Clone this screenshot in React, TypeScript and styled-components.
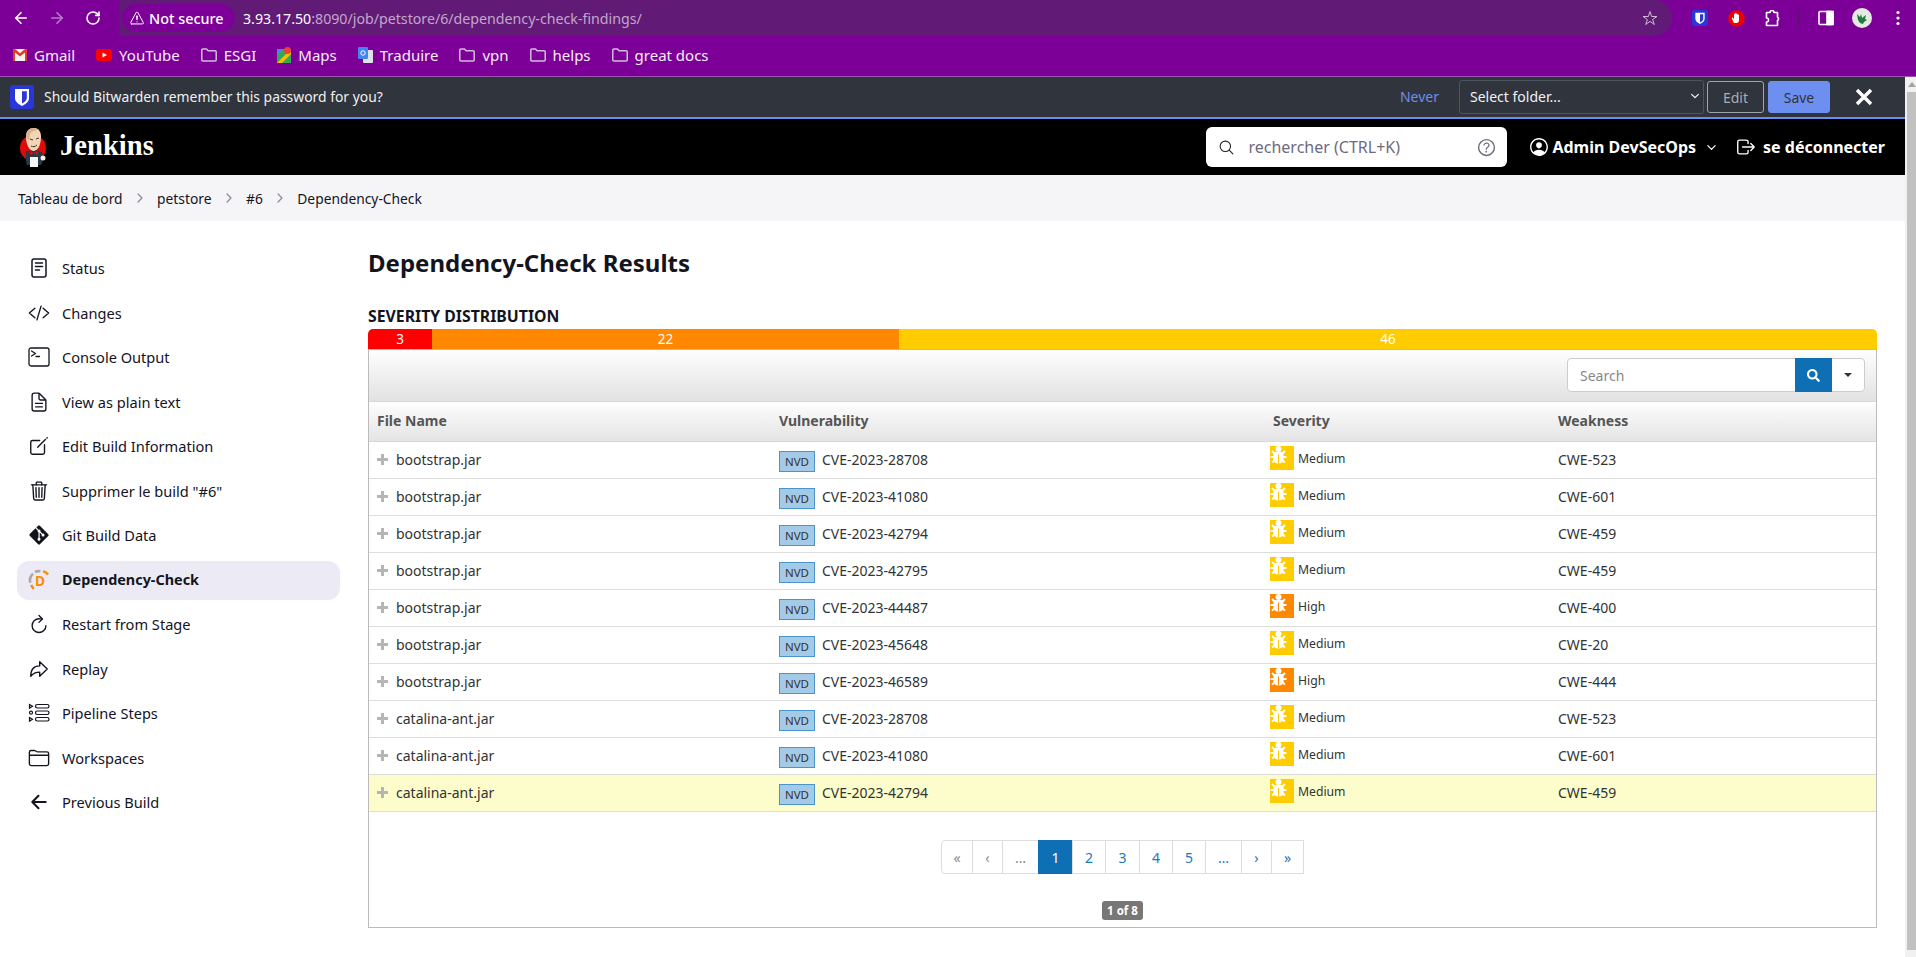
import React from 'react'
import styled, { createGlobalStyle } from 'styled-components'
import { ArrowLeft, ArrowRight, RotateCw } from 'lucide-react'
import {
  IoArrowBack,
  IoArrowRedoOutline,
  IoChevronDown,
  IoChevronForward,
  IoCodeSlashOutline,
  IoCreateOutline,
  IoDocumentTextOutline,
  IoFolderOutline,
  IoHelpCircleOutline,
  IoLogOutOutline,
  IoPersonCircleOutline,
  IoRefreshOutline,
  IoSearchOutline,
  IoStarOutline,
  IoTrashOutline,
  IoWarningOutline,
} from 'react-icons/io5'
import { FaGitAlt, FaSearch } from 'react-icons/fa'

const GlobalStyle = createGlobalStyle`
  html, body {
    margin: 0;
    height: 957px;
    overflow: hidden;
    background: #fff;
    font-family: "Noto Sans", "Open Sans", sans-serif;
    color: #14141f;
  }
  * { box-sizing: border-box; }
`

const Page = styled.div`
  width: 1916px;
  height: 957px;
  display: flex;
  flex-direction: column;
  overflow: hidden;
`

/* browser chrome */
const Toolbar = styled.div`
  height: 36px;
  flex: none;
  background: #7c0098;
  display: flex;
  align-items: center;
  padding-left: 3px;
  color: #fff;
`
const NavButton = styled.span<{ $dim?: boolean }>`
  width: 36px;
  display: flex;
  justify-content: center;
  color: ${p => (p.$dim ? '#b57ec6' : '#fff')};
`
const AddressBar = styled.div`
  margin-left: 8px;
  width: 1553px;
  height: 36px;
  background: #611b76;
  border-radius: 0 18px 18px 0;
  display: flex;
  align-items: center;
  padding: 0 14px 0 3px;
  font-size: 14.2px;
`
const SecureChip = styled.span`
  height: 28px;
  width: 113px;
  background: #7c0098;
  border-radius: 14px;
  display: flex;
  align-items: center;
  gap: 4px;
  padding-left: 7px;
  font-size: 14.4px;
  font-weight: 500;
  svg { font-size: 16px; }
`
const Url = styled.span`
  margin-left: 8px;
  color: #fff;
  span { color: #c3a6cd; }
`
const StarSlot = styled.span`
  margin-left: auto;
  color: #cdb9d4;
  font-size: 16px;
  display: flex;
`
const Extensions = styled.div`
  display: flex;
  align-items: center;
  margin-left: 10px;
`
const ExtSlot = styled.span`
  width: 36px;
  display: flex;
  justify-content: center;
  svg { display: block; }
`
const ToolDivider = styled.span`
  width: 1px;
  height: 16px;
  margin: 0 9px 0 8px;
  background: #551268;
`

const Bookmarks = styled.div`
  height: 41px;
  flex: none;
  background: #7c0098;
  border-bottom: 1px solid #9a55ad;
  padding: 0 0 2px 13px;
  display: flex;
  align-items: center;
  gap: 21px;
  color: #f6ecf8;
  font-size: 15px;
`
const Bookmark = styled.span`
  display: flex;
  align-items: center;
  gap: 7px;
  svg { display: block; }
`

/* window area: page on the left, window scrollbar on the right */
const Viewport = styled.div`
  flex: 1;
  display: flex;
  min-height: 0;
`
const ViewportBody = styled.div`
  flex: 1;
  min-width: 0;
`
const Scrollbar = styled.div`
  width: 11px;
  flex: none;
  background: #f1f1f1;
  display: flex;
  flex-direction: column;
  align-items: center;
  padding-top: 5px;
`
const ScrollArrow = styled.span`
  width: 0;
  height: 0;
  margin-left: 2px;
  border-left: 4px solid transparent;
  border-right: 4px solid transparent;
  border-bottom: 5px solid #a3a3a3;
`
const ScrollThumb = styled.span`
  width: 9px;
  flex: 1;
  align-self: flex-end;
  background: #c1c1c1;
  margin: 5px 0 7px;
`

/* bitwarden notification */
const NotifyBar = styled.div`
  height: 42px;
  background: #2f343d;
  border-bottom: 2px solid #6b8eee;
  display: flex;
  align-items: center;
  padding-left: 10px;
  color: #f0f0f0;
  font-size: 14px;
`
const NotifyText = styled.span`
  margin: 0 0 2px 10px;
  font-size: 13.9px;
`
const NeverLink = styled.span`
  margin: 0 0 2px auto;
  color: #6f8fe8;
`
const FolderSelect = styled.span`
  margin-left: 20px;
  width: 245px;
  height: 34px;
  border: 1px solid #4f5560;
  border-radius: 3px;
  display: flex;
  align-items: center;
  justify-content: space-between;
  padding: 0 2px 2px 10px;
  font-size: 14px;
  svg { font-size: 12px; color: #fff; }
`
const NotifyButton = styled.span<{ $primary?: boolean }>`
  height: 32px;
  margin-left: ${p => (p.$primary ? '4px' : '3px')};
  width: ${p => (p.$primary ? '62px' : '57px')};
  border: 1px solid ${p => (p.$primary ? '#6d8ff0' : '#a0a5ad')};
  background: ${p => (p.$primary ? '#6d8ff0' : 'transparent')};
  color: ${p => (p.$primary ? '#2f343d' : '#a9adb5')};
  border-radius: 3px;
  display: flex;
  align-items: center;
  justify-content: center;
  font-size: 14px;
`
const CloseX = styled.span`
  margin: 0 32px 0 25px;
  display: flex;
  svg { display: block; }
`

/* jenkins */
const JenkinsHeader = styled.header`
  height: 56px;
  background: #000;
  color: #fff;
  display: flex;
  align-items: center;
  padding: 0 20px 0 19px;
`
const Brand = styled.span`
  font-family: "Liberation Serif", serif;
  font-weight: 700;
  font-size: 28.6px;
  margin: 0 0 3px 13px;
`
const HeaderSearch = styled.div`
  margin-left: auto;
  width: 301px;
  height: 40px;
  background: #fff;
  border-radius: 6px;
  display: flex;
  align-items: center;
  padding: 0 9px 0 12px;
  color: #6d6b80;
  font-size: 16px;
  svg:first-child { font-size: 17px; color: #222; }
  span { margin-left: 13px; flex: 1; }
  svg:last-child { font-size: 23px; color: #6d6b80; }
`
const HeaderLink = styled.span`
  display: flex;
  align-items: center;
  font-weight: 700;
  font-size: 16px;
  svg { display: block; }
`
const UserLink = styled(HeaderLink)`
  margin-left: 21px;
  gap: 2px;
  svg:last-child { margin-left: 7px; }
`
const LogoutLink = styled(HeaderLink)`
  margin-left: 17px;
  gap: 6px;
`
const Breadcrumbs = styled.nav`
  height: 46px;
  background: #f5f5f7;
  display: flex;
  align-items: center;
  padding-left: 18px;
  font-size: 13.8px;
  svg { color: #8d8d99; font-size: 14px; margin: 0 10px 0 10.5px; }
`
const Layout = styled.div`
  display: flex;
  align-items: flex-start;
`
const Sidebar = styled.aside`
  width: 323px;
  margin-left: 17px;
  padding-top: 28px;
  display: flex;
  flex-direction: column;
  gap: 5.5px;
`
const SideItem = styled.a<{ $active?: boolean }>`
  height: 39px;
  display: flex;
  align-items: center;
  gap: 12px;
  padding: 0 0 1px 11px;
  border-radius: 12px;
  font-size: ${p => (p.$active ? '14.4px' : '14.6px')};
  font-weight: ${p => (p.$active ? 700 : 400)};
  background: ${p => (p.$active ? '#ecebf5' : 'transparent')};
`
const SideIcon = styled.span`
  width: 22px;
  height: 22px;
  display: flex;
  align-items: center;
  justify-content: center;
  font-size: 22px;
  svg { display: block; }
`
const Main = styled.main`
  width: 1509px;
  margin-left: 28px;
  padding-top: 25px;
`
const Title = styled.h1`
  margin: 0;
  font-size: 24px;
  line-height: 33px;
  font-weight: 700;
`
const SectionLabel = styled.h2`
  margin: 27px 0 3px;
  font-size: 15.8px;
  line-height: 20px;
  font-weight: 700;
`
const SeverityBar = styled.div`
  height: 20px;
  display: flex;
  border-radius: 5px 5px 0 0;
  overflow: hidden;
`
const SeveritySegment = styled.span<{ $color: string; $width?: number }>`
  width: ${p => (p.$width ? `${p.$width}px` : 'auto')};
  flex: ${p => (p.$width ? 'none' : 1)};
  background: ${p => p.$color};
  color: #fff;
  font-size: 13.5px;
  line-height: 20px;
  text-align: center;
`
const Panel = styled.section`
  border: 1px solid #bbb;
  height: 579px;
  display: flex;
  flex-direction: column;
  align-items: center;
`
const PanelToolbar = styled.div`
  align-self: stretch;
  height: 52px;
  flex: none;
  background: linear-gradient(#fefefe, #e2e2e2);
  border-bottom: 1px solid #d8d8d8;
  display: flex;
  justify-content: flex-end;
  padding: 8px 11px 0 0;
`
const SearchGroup = styled.div`
  width: 298px;
  height: 34px;
  display: flex;
  background: #fff;
  border: 1px solid #ccc;
  border-radius: 4px;
`
const SearchInput = styled.span`
  flex: 1;
  padding-left: 12px;
  color: #888;
  font-size: 14px;
  line-height: 33px;
`
const SearchButton = styled.span`
  width: 37px;
  margin: -1px 0;
  background: #0f6fb5;
  color: #fff;
  display: flex;
  align-items: center;
  justify-content: center;
  font-size: 13px;
`
const CaretButton = styled.span`
  width: 32px;
  display: flex;
  align-items: center;
  justify-content: center;
  &::before {
    content: '';
    border-left: 4px solid transparent;
    border-right: 4px solid transparent;
    border-top: 4px solid #333;
  }
`
const Table = styled.table`
  width: 100%;
  flex: none;
  table-layout: fixed;
  border-collapse: separate;
  border-spacing: 0;
  font-size: 14px;
  color: #333;
`
const HeadCell = styled.th`
  height: 40px;
  padding: 0 8px 2px;
  background: linear-gradient(#fefefe, #e4e4e4);
  border-bottom: 1px solid #d8d8d8;
  color: #555;
  font-size: 14px;
  font-weight: 700;
  text-align: left;
`
const Cell = styled.td<{ $hl?: boolean }>`
  height: 37px;
  padding: 0 8px 2px;
  background: ${p => (p.$hl ? '#fcfdcb' : '#fff')};
  border-bottom: 1px solid #ddd;
`
const FileCell = styled.span`
  display: flex;
  align-items: center;
  gap: 8px;
`
const PlusIcon = styled.span`
  width: 11px;
  height: 11px;
  background:
    linear-gradient(#b5b5b5, #b5b5b5) center / 100% 3px no-repeat,
    linear-gradient(#b5b5b5, #b5b5b5) center / 3px 100% no-repeat;
`
const VulnCell = styled.span`
  display: flex;
  align-items: center;
  gap: 7px;
`
const SourceTag = styled.span`
  width: 36px;
  height: 21px;
  margin-top: 4px;
  background: #a3cbe8;
  border: 1px solid #4a94c8;
  text-align: center;
  font-size: 11.5px;
  line-height: 20px;
`
const SeverityCell = styled(Cell)`
  padding: 4px 4px 0 5px;
  vertical-align: top;
`
const SeverityTag = styled.span`
  display: flex;
  align-items: center;
  gap: 4px;
  font-size: 12.2px;
`
const BugBox = styled.span<{ $high?: boolean }>`
  width: 24px;
  height: 24px;
  background: ${p => (p.$high ? '#ff8800' : '#ffcc00')};
  color: ${p => (p.$high ? '#ff8800' : '#ffcc00')};
  svg { display: block; }
`
const Pager = styled.ul`
  list-style: none;
  margin: 28px 0 0;
  padding: 0;
  display: flex;
  height: 34px;
  border-radius: 4px;
`
const PageCell = styled.li<{ $w: number; $active?: boolean; $muted?: boolean }>`
  width: ${p => p.$w}px;
  border: 1px solid #ddd;
  margin-left: -1px;
  display: flex;
  align-items: center;
  justify-content: center;
  font-size: 14px;
  background: ${p => (p.$active ? '#0f6fb5' : '#fff')};
  border-color: ${p => (p.$active ? '#0f6fb5' : '#ddd')};
  color: ${p => (p.$active ? '#fff' : p.$muted ? '#8a8a8a' : '#1f77bb')};
  &:first-child { border-radius: 4px 0 0 4px; margin-left: 0; }
`
const PageBadge = styled.span`
  margin-top: 27px;
  height: 19px;
  width: 41px;
  border-radius: 3px;
  background: #777;
  color: #fff;
  font-size: 11.5px;
  font-weight: 700;
  line-height: 19px;
  text-align: center;
`

const Folder = () => (
  <svg width="16" height="14" viewBox="0 0 16 14" fill="none" stroke="#d3bcdb" strokeWidth="1.5">
    <path d="M.8 2a1 1 0 0 1 1-1h3.700l1.600 1.800h7.100a1 1 0 0 1 1 1V12a1 1 0 0 1-1 1H1.800a1 1 0 0 1-1-1z" />
  </svg>
)

const BitwardenShield = ({ size = 24 }: { size?: number }) => (
  <svg width={size} height={size} viewBox="0 0 24 24">
    <rect width="24" height="24" rx="3" fill="#2a36d8" />
    <path d="M5 4h14v9c0 4-3.600 6.200-7 8-3.400-1.800-7-4-7-8z" fill="#fff" />
    <path d="M12 6.200h4.800v6.800c0 2.600-2.400 4.200-4.800 5.600z" fill="#2a36d8" />
  </svg>
)

const Bug = () => (
  <svg width="24" height="24" viewBox="0 0 24 24" fill="#fff" stroke="none">
    <circle cx="8.500" cy="3" r="3" />
    <rect x="3.500" y="6" width="10" height="9" rx="1" />
    <path d="M3.500 13h10v1c0 2-2 3.500-5 3.500s-5-1.500-5-3.500z" />
    <rect x="8" y="8.500" width="1" height="9" fill="currentColor" />
    <g stroke="#fff" strokeWidth="2" fill="none">
      <path d="M4.500 7.500L2 5M12.500 7.500L15 5M4 11H.5M13 11h3.500M4.500 14.500L2 16.500M12.500 14.500l2.500 2" />
    </g>
  </svg>
)

const JenkinsLogo = () => (
  <svg width="28" height="40" viewBox="0 0 28 40">
    <circle cx="14" cy="21" r="13" fill="#e00a0a" />
    <path d="M7 24c-1 5 0 11 1 14h14c2-4 3-8 1-13l-6-2z" fill="#2d3a45" />
    <rect x="11" y="30" width="8" height="10" fill="#f5f5f5" />
    <path d="M7 10c0-6 3-9 8-9 5 0 7 4 7 9 0 6-2 13-7 14-5 0-8-7-8-14z" fill="#f0d6b7" />
    <path d="M7 10c0-6 3-9 8-9 2 0 4 1 5 2-4 0-7 1-9 4l-1 7z" fill="#d9b18f" />
    <path d="M11 12l3 1M17 12l3-1M12 19c2 1 4 1 6-1" stroke="#49392e" strokeWidth="1" fill="none" />
    <path d="M11 24l4 2 4-2v4l-4-2-4 2z" fill="#e00a0a" />
    <circle cx="24" cy="31" r="2.500" fill="#f0f0f0" />
  </svg>
)

const StatusIcon = () => (
  <svg width="22" height="22" viewBox="0 0 22 22" fill="none" stroke="currentColor" strokeWidth="1.500" strokeLinecap="round">
    <rect x="4" y="2" width="14" height="18" rx="2" />
    <path d="M7.500 6h7M7.500 9.500h7M7.500 13h4" />
  </svg>
)

const ConsoleIcon = () => (
  <svg width="22" height="22" viewBox="0 0 22 22" fill="none" stroke="currentColor" strokeWidth="1.300" strokeLinecap="round" strokeLinejoin="round">
    <rect x="1" y="2" width="20" height="18" rx="2" />
    <path d="M3.500 5l4 2.500-4 2.500M8 10.500h3.500" />
  </svg>
)

const StepsIcon = () => (
  <svg width="22" height="22" viewBox="0 0 22 22" fill="none" stroke="currentColor" strokeWidth="1.200">
    <rect x="7.500" y="2.500" width="13.500" height="3.500" rx="1.700" />
    <rect x="7.500" y="9" width="13.500" height="3.500" rx="1.700" />
    <rect x="7.500" y="15.500" width="13.500" height="3.500" rx="1.700" />
    <path d="M1.500 2.500l3 1.800-3 1.800zM1.500 15.500l3 1.800-3 1.800z" />
    <circle cx="3" cy="10.700" r="1.500" />
  </svg>
)

const DepCheckIcon = () => (
  <svg width="24" height="24" viewBox="0 0 24 24" fill="none" strokeWidth="2.800">
    <path d="M2.500 15a10 10 0 0 1 3-10M7.500 3.300a10 10 0 0 1 6-.8" stroke="#a9a9a9" />
    <path d="M16.500 2.400a10 10 0 0 1 5.500 3.600M3.500 17.500a10 10 0 0 0 3 4" stroke="#ff8c00" />
    <text x="13" y="19" textAnchor="middle" fontFamily="'Noto Sans', sans-serif" fontSize="15" fontWeight="700" fill="#ff8c00" stroke="none">D</text>
  </svg>
)

const sideItems: { label: string; icon: React.ReactNode; active?: boolean }[] = [
  { label: 'Status', icon: <StatusIcon /> },
  { label: 'Changes', icon: <IoCodeSlashOutline /> },
  { label: 'Console Output', icon: <ConsoleIcon /> },
  { label: 'View as plain text', icon: <IoDocumentTextOutline /> },
  { label: 'Edit Build Information', icon: <IoCreateOutline /> },
  { label: 'Supprimer le build "#6"', icon: <IoTrashOutline /> },
  { label: 'Git Build Data', icon: <FaGitAlt /> },
  { label: 'Dependency-Check', icon: <DepCheckIcon />, active: true },
  { label: 'Restart from Stage', icon: <IoRefreshOutline /> },
  { label: 'Replay', icon: <IoArrowRedoOutline /> },
  { label: 'Pipeline Steps', icon: <StepsIcon /> },
  { label: 'Workspaces', icon: <IoFolderOutline /> },
  { label: 'Previous Build', icon: <IoArrowBack /> },
]

const findings = [
  ['bootstrap.jar', 'CVE-2023-28708', 'Medium', 'CWE-523'],
  ['bootstrap.jar', 'CVE-2023-41080', 'Medium', 'CWE-601'],
  ['bootstrap.jar', 'CVE-2023-42794', 'Medium', 'CWE-459'],
  ['bootstrap.jar', 'CVE-2023-42795', 'Medium', 'CWE-459'],
  ['bootstrap.jar', 'CVE-2023-44487', 'High', 'CWE-400'],
  ['bootstrap.jar', 'CVE-2023-45648', 'Medium', 'CWE-20'],
  ['bootstrap.jar', 'CVE-2023-46589', 'High', 'CWE-444'],
  ['catalina-ant.jar', 'CVE-2023-28708', 'Medium', 'CWE-523'],
  ['catalina-ant.jar', 'CVE-2023-41080', 'Medium', 'CWE-601'],
  ['catalina-ant.jar', 'CVE-2023-42794', 'Medium', 'CWE-459'],
]

const pages: { label: string; w: number; active?: boolean; muted?: boolean }[] = [
  { label: '«', w: 32, muted: true },
  { label: '‹', w: 31, muted: true },
  { label: '…', w: 37, muted: true },
  { label: '1', w: 35, active: true },
  { label: '2', w: 34 },
  { label: '3', w: 35 },
  { label: '4', w: 34 },
  { label: '5', w: 34 },
  { label: '…', w: 37 },
  { label: '›', w: 31 },
  { label: '»', w: 33 },
]

const App = () => (
  <Page>
    <GlobalStyle />
    <Toolbar>
      <NavButton><ArrowLeft size={18} strokeWidth={2.2} /></NavButton>
      <NavButton $dim><ArrowRight size={18} strokeWidth={2.2} /></NavButton>
      <NavButton><RotateCw size={16} strokeWidth={2.4} /></NavButton>
      <AddressBar>
        <SecureChip><IoWarningOutline /> Not secure</SecureChip>
        <Url>3.93.17.50<span>:8090/job/petstore/6/dependency-check-findings/</span></Url>
        <StarSlot><IoStarOutline /></StarSlot>
      </AddressBar>
      <Extensions>
        <ExtSlot><BitwardenShield size={16} /></ExtSlot>
        <ExtSlot>
          <svg width="17" height="17" viewBox="0 0 17 17">
            <path d="M5 .5h7L16.500 5v7L12 16.500H5L.5 12V5z" fill="#f00000" />
            <path d="M5.500 12.500L4 8.500c-.4-1 .8-1.400 1.200-.6l.8 1.300V4.500c0-1 1.200-1 1.200 0V3.500c0-1 1.300-1 1.300 0v1c0-1 1.300-1 1.300 0v.6c0-.9 1.200-.9 1.200 0v5c0 2-1 3-2.500 3H7c-.7 0-1.200-.2-1.500-.6z" fill="#fff" />
          </svg>
        </ExtSlot>
        <ExtSlot>
          <svg width="17" height="17" viewBox="0 0 17 17" fill="none" stroke="#fff" strokeWidth="1.600" strokeLinejoin="round">
            <path d="M2.500 2.500h3.500a2 2 0 0 1 4 0h3.500V7a2 2 0 0 1 0 3.500v5H2.500V12a2 2 0 0 0 0-4z" />
          </svg>
        </ExtSlot>
        <ToolDivider />
        <ExtSlot>
          <svg width="16" height="16" viewBox="0 0 16 16" fill="none" stroke="#fff" strokeWidth="1.600">
            <rect x="1" y="1.500" width="14" height="13" rx="1" />
            <rect x="9" y="1.500" width="6" height="13" fill="#fff" />
          </svg>
        </ExtSlot>
        <ExtSlot>
          <svg width="20" height="20" viewBox="0 0 20 20">
            <circle cx="10" cy="10" r="10" fill="#e4e9e2" />
            <path d="M5 6l3 3 1-3 1 4 4-3-1 4 2 1-3 2-1 2-3-1-2-3z" fill="#1f7a3e" />
          </svg>
        </ExtSlot>
        <ExtSlot>
          <svg width="16" height="16" viewBox="0 0 16 16" fill="#fff">
            <circle cx="8" cy="2.500" r="1.600" />
            <circle cx="8" cy="8" r="1.600" />
            <circle cx="8" cy="13.500" r="1.600" />
          </svg>
        </ExtSlot>
      </Extensions>
    </Toolbar>
    <Bookmarks>
      <Bookmark>
        <svg width="14" height="12" viewBox="0 0 14 12">
          <rect width="14" height="12" rx="1" fill="#f4f4f4" />
          <path d="M0 0h2l5 4.200L12 0h2v12h-2V3.500L7 7.500 2 3.500V12H0z" fill="#e03a2e" />
        </svg>
        Gmail
      </Bookmark>
      <Bookmark>
        <svg width="16" height="12" viewBox="0 0 16 12">
          <rect width="16" height="12" rx="3" fill="#f00" />
          <path d="M6.500 3.500L11 6l-4.500 2.500z" fill="#fff" />
        </svg>
        YouTube
      </Bookmark>
      <Bookmark><Folder /> ESGI</Bookmark>
      <Bookmark>
        <svg width="14" height="16" viewBox="0 0 14 16">
          <rect y="2" width="14" height="14" fill="#34a853" />
          <path d="M0 16L14 2v5L5 16z" fill="#fbbc04" />
          <path d="M0 2h6L0 8z" fill="#4285f4" />
          <circle cx="10.500" cy="3.500" r="3.500" fill="#ea4335" />
        </svg>
        Maps
      </Bookmark>
      <Bookmark>
        <svg width="15" height="16" viewBox="0 0 15 16">
          <rect x="5" y="3" width="10" height="13" rx="1" fill="#dfe3e8" />
          <rect width="10" height="12" rx="1" fill="#4285f4" />
          <circle cx="5" cy="6" r="2.200" stroke="#fff" fill="none" />
        </svg>
        Traduire
      </Bookmark>
      <Bookmark><Folder /> vpn</Bookmark>
      <Bookmark><Folder /> helps</Bookmark>
      <Bookmark><Folder /> great docs</Bookmark>
    </Bookmarks>
    <Viewport>
      <ViewportBody>
        <NotifyBar>
          <BitwardenShield />
          <NotifyText>Should Bitwarden remember this password for you?</NotifyText>
          <NeverLink>Never</NeverLink>
          <FolderSelect>Select folder...<IoChevronDown /></FolderSelect>
          <NotifyButton>Edit</NotifyButton>
          <NotifyButton $primary>Save</NotifyButton>
          <CloseX>
            <svg width="18" height="18" viewBox="0 0 18 18" stroke="#fff" strokeWidth="3.400">
              <path d="M2 2l14 14M16 2L2 16" />
            </svg>
          </CloseX>
        </NotifyBar>
        <JenkinsHeader>
          <JenkinsLogo />
          <Brand>Jenkins</Brand>
          <HeaderSearch>
            <IoSearchOutline />
            <span>rechercher (CTRL+K)</span>
            <IoHelpCircleOutline />
          </HeaderSearch>
          <UserLink>
            <IoPersonCircleOutline size={22} />
            Admin DevSecOps
            <IoChevronDown size={13} />
          </UserLink>
          <LogoutLink>
            <IoLogOutOutline size={22} />
            se déconnecter
          </LogoutLink>
        </JenkinsHeader>
        <Breadcrumbs>
          Tableau de bord<IoChevronForward />petstore<IoChevronForward />#6<IoChevronForward />Dependency-Check
        </Breadcrumbs>
        <Layout>
          <Sidebar>
            {sideItems.map(item => (
              <SideItem key={item.label} $active={item.active}>
                <SideIcon>{item.icon}</SideIcon>
                {item.label}
              </SideItem>
            ))}
          </Sidebar>
          <Main>
            <Title>Dependency-Check Results</Title>
            <SectionLabel>SEVERITY DISTRIBUTION</SectionLabel>
            <SeverityBar>
              <SeveritySegment $color="#f00" $width={64}>3</SeveritySegment>
              <SeveritySegment $color="#ff8800" $width={467}>22</SeveritySegment>
              <SeveritySegment $color="#ffcc00">46</SeveritySegment>
            </SeverityBar>
            <Panel>
              <PanelToolbar>
                <SearchGroup>
                  <SearchInput>Search</SearchInput>
                  <SearchButton><FaSearch /></SearchButton>
                  <CaretButton />
                </SearchGroup>
              </PanelToolbar>
              <Table>
                <colgroup>
                  <col width={402} />
                  <col width={494} />
                  <col width={285} />
                  <col />
                </colgroup>
                <thead>
                  <tr>
                    <HeadCell>File Name</HeadCell>
                    <HeadCell>Vulnerability</HeadCell>
                    <HeadCell>Severity</HeadCell>
                    <HeadCell>Weakness</HeadCell>
                  </tr>
                </thead>
                <tbody>
                  {findings.map(([file, cve, severity, cwe], index) => {
                    const hl = index === findings.length - 1
                    return (
                      <tr key={index}>
                        <Cell $hl={hl}>
                          <FileCell><PlusIcon />{file}</FileCell>
                        </Cell>
                        <Cell $hl={hl}>
                          <VulnCell><SourceTag>NVD</SourceTag>{cve}</VulnCell>
                        </Cell>
                        <SeverityCell $hl={hl}>
                          <SeverityTag>
                            <BugBox $high={severity === 'High'}><Bug /></BugBox>
                            {severity}
                          </SeverityTag>
                        </SeverityCell>
                        <Cell $hl={hl}>{cwe}</Cell>
                      </tr>
                    )
                  })}
                </tbody>
              </Table>
              <Pager>
                {pages.map((page, index) => (
                  <PageCell key={index} $w={page.w} $active={page.active} $muted={page.muted}>
                    {page.label}
                  </PageCell>
                ))}
              </Pager>
              <PageBadge>1 of 8</PageBadge>
            </Panel>
          </Main>
        </Layout>
      </ViewportBody>
      <Scrollbar>
        <ScrollArrow />
        <ScrollThumb />
      </Scrollbar>
    </Viewport>
  </Page>
)

export default App
